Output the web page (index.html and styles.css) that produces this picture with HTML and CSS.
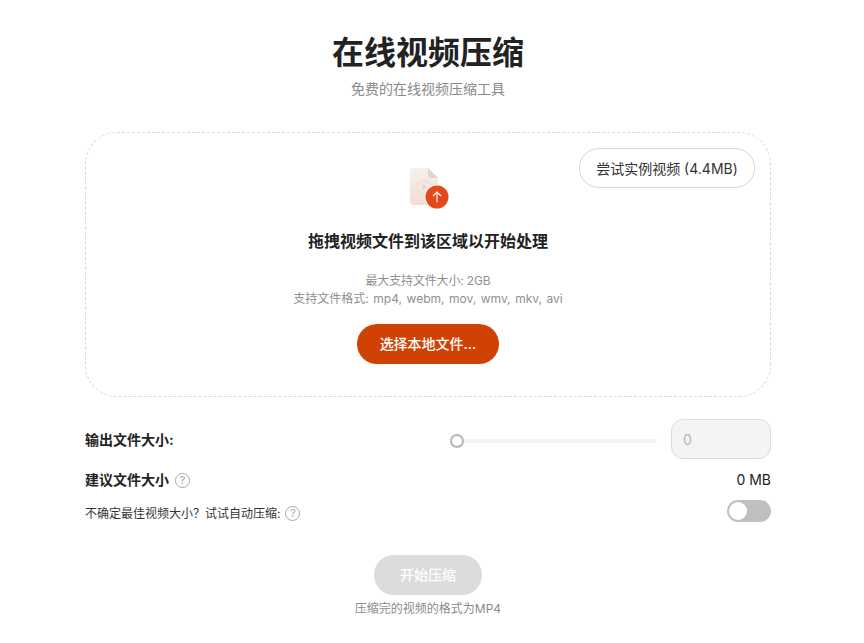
FILE: index.html
```html
<!DOCTYPE html>
<html lang="zh-CN">

<head>
    <meta charset="UTF-8">
    <meta name="viewport" content="width=device-width, initial-scale=1.0">
    <title>在线视频压缩</title>
    <link rel="stylesheet" href="styles.css">
</head>

<body>
    <main class="page">
        <header class="header">
            <h1 class="title">在线视频压缩</h1>
            <p class="subtitle">免费的在线视频压缩工具</p>
        </header>

        <section class="dropzone">
            <button class="sample-btn">尝试实例视频 (4.4MB)</button>
            <svg class="upload-icon" width="40" height="44" viewBox="0 0 40 44">
                <defs>
                    <linearGradient id="doc" x1="0" y1="0" x2="0" y2="1">
                        <stop offset="0" stop-color="#f8f0ec" />
                        <stop offset="1" stop-color="#f4dcd0" />
                    </linearGradient>
                </defs>
                <path d="M4 0H18L28 10V33a4 4 0 0 1-4 4H4a4 4 0 0 1-4-4V4a4 4 0 0 1 4-4Z" fill="url(#doc)" />
                <path d="M18 0L28 10H21a3 3 0 0 1-3-3Z" fill="#dcd6d2" />
                <circle cx="14" cy="19" r="7" fill="none" stroke="#eadcd5" stroke-width="1.2" />
                <path d="M12 15.5L17.5 19L12 22.5Z" fill="#e6d8d2" />
                <circle cx="27" cy="29" r="12.5" fill="#fff" />
                <circle cx="27" cy="29" r="11.5" fill="#e5481b" />
                <path d="M27 34.5V24M23 28L27 24L31 28" fill="none" stroke="#fff" stroke-width="1.1" />
            </svg>
            <h2 class="drop-title">拖拽视频文件到该区域以开始处理</h2>
            <p class="drop-info">
                <span class="info-size">最大支持文件大小: 2GB</span>
                <span class="info-formats">支持文件格式: mp4, webm, mov, wmv, mkv, avi</span>
            </p>
            <button class="pick-btn">选择本地文件…</button>
        </section>

        <section class="options">
            <div class="row row-size">
                <span class="label">输出文件大小:</span>
                <div class="size-control">
                    <div class="slider"><span class="thumb"></span></div>
                    <div class="size-input">0</div>
                </div>
            </div>
            <div class="row row-suggest">
                <span class="label">建议文件大小 <span class="help">?</span></span>
                <span class="value">0 MB</span>
            </div>
            <div class="row row-auto">
                <span class="hint">不确定最佳视频大小？试试自动压缩: <span class="help">?</span></span>
                <span class="switch"><span class="knob"></span></span>
            </div>
        </section>

        <footer class="actions">
            <button class="start-btn">开始压缩</button>
            <p class="note">压缩完的视频的格式为MP4</p>
        </footer>
    </main>
</body>

</html>
```

FILE: styles.css
```css
* {
    box-sizing: border-box;
}

body {
    margin: 0;
    padding-right: 8px;
    background: #fff;
    color: #222;
    font-family: "Inter", "Noto Sans CJK SC", sans-serif;
}

button {
    font-family: inherit;
}

.page {
    width: 686px;
    margin: 0 auto;
    padding-top: 30px;
}

.header {
    text-align: center;
}

.title {
    margin: 0;
    font-size: 32px;
    line-height: 46px;
    font-weight: 700;
    color: #222;
}

.subtitle {
    margin: 3px 0 0;
    font-size: 14px;
    line-height: 20px;
    color: #8a8a8a;
}

.dropzone {
    position: relative;
    display: flex;
    flex-direction: column;
    align-items: center;
    height: 265px;
    margin-top: 33px;
    padding-top: 35px;
    border: 1px dashed #d9d9d9;
    border-radius: 32px;
}

.sample-btn {
    position: absolute;
    top: 15px;
    right: 15px;
    width: 176px;
    height: 40px;
    padding: 0;
    border: 1px solid #d4d4d4;
    border-radius: 20px;
    background: #fff;
    color: #333;
    font-size: 14px;
}

.upload-icon {
    display: block;
    margin-left: 4px;
}

.drop-title {
    margin: 18px 0 0;
    font-size: 16px;
    line-height: 22px;
    font-weight: 700;
    color: #222;
}

.drop-info {
    margin: 20px 0 0;
    font-size: 12px;
    line-height: 18px;
    text-align: center;
    color: #8f8f8f;
}

.info-size,
.info-formats {
    display: block;
}

.info-size {
    letter-spacing: -0.15px;
}

.info-formats {
    word-spacing: 1.2px;
}

.pick-btn {
    width: 142px;
    height: 40px;
    margin-top: 16px;
    padding: 0 0 2px;
    border: 0;
    border-radius: 20px;
    background: #cf4204;
    color: #fff;
    font-size: 14px;
    font-weight: 500;
}

.options {
    margin-top: 22px;
}

.row {
    display: flex;
    align-items: center;
    justify-content: space-between;
}

.row-size {
    height: 40px;
}

.row-suggest {
    height: 24px;
    margin-top: 8px;
}

.row-auto {
    height: 24px;
    margin-top: 9px;
}

.label {
    display: flex;
    align-items: center;
    gap: 6px;
    font-size: 14px;
    font-weight: 700;
    color: #222;
}

.hint {
    display: flex;
    align-items: center;
    gap: 5px;
    font-size: 12px;
    color: #333;
}

.help {
    display: flex;
    align-items: center;
    justify-content: center;
    width: 15px;
    height: 15px;
    margin-top: 2px;
    border: 1.2px solid #a8a8a8;
    border-radius: 50%;
    font-size: 11px;
    font-weight: 400;
    color: #a8a8a8;
}

.size-control {
    display: flex;
    align-items: center;
    gap: 14px;
}

.slider {
    position: relative;
    width: 207px;
    height: 4px;
    margin-top: 3px;
    border-radius: 2px;
    background: #f3f3f3;
}

.thumb {
    position: absolute;
    top: -5px;
    left: 0;
    width: 14px;
    height: 14px;
    border: 2px solid #b5b5b5;
    border-radius: 50%;
    background: #fff;
}

.size-input {
    display: flex;
    align-items: center;
    width: 100px;
    height: 40px;
    padding-left: 11px;
    border: 1px solid #dcdcdc;
    border-radius: 12px;
    background: #f4f4f4;
    color: #b5b5b5;
    font-size: 14px;
}

.value {
    font-size: 14px;
    color: #222;
}

.switch {
    display: block;
    width: 44px;
    height: 22px;
    margin-top: -2px;
    padding: 2px;
    border-radius: 11px;
    background: #bfbfbf;
}

.knob {
    display: block;
    width: 18px;
    height: 18px;
    border-radius: 50%;
    background: #fff;
}

.actions {
    display: flex;
    flex-direction: column;
    align-items: center;
    margin-top: 31px;
}

.start-btn {
    width: 108px;
    height: 40px;
    padding: 0 0 2px;
    border: 0;
    border-radius: 20px;
    background: #dcdcdc;
    color: #fff;
    font-size: 14px;
    font-weight: 500;
}

.note {
    margin: 5px 0 0;
    font-size: 12px;
    line-height: 18px;
    color: #8a8a8a;
}
```
